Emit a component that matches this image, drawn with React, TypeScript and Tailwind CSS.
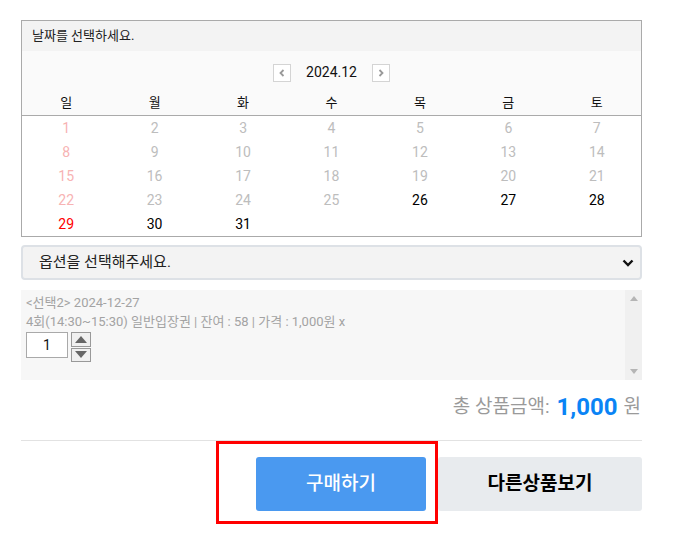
import React from "react";

const weekdays = ["일", "월", "화", "수", "목", "금", "토"];

// day -> style
const dayColor = (d: number, col: number) => {
  if (d === 29) return "text-[#ff0000]";
  if (d >= 26) return "text-black";
  if (col === 0) return "text-[#f7b3b3]";
  return "text-[#bdbdbd]";
};

const weeks: (number | null)[][] = [
  [1, 2, 3, 4, 5, 6, 7],
  [8, 9, 10, 11, 12, 13, 14],
  [15, 16, 17, 18, 19, 20, 21],
  [22, 23, 24, 25, 26, 27, 28],
  [29, 30, 31, null, null, null, null],
];

const NavBtn = ({ dir }: { dir: "prev" | "next" }) => (
  <button className="w-[18px] h-[18px] border border-[#d4d4d4] bg-white flex items-center justify-center">
    <svg width="8" height="8" viewBox="0 0 8 8">
      {dir === "prev" ? (
        <path d="M5.5 1 L2.5 4 L5.5 7" stroke="#999" strokeWidth="1.8" fill="none" />
      ) : (
        <path d="M2.5 1 L5.5 4 L2.5 7" stroke="#999" strokeWidth="1.8" fill="none" />
      )}
    </svg>
  </button>
);

export default function App() {
  return (
    <div
      className="relative w-[693px] h-[551px] bg-white"
      style={{ fontFamily: "Roboto, 'Noto Sans CJK KR', sans-serif" }}
    >
      <div className="ml-[21px] w-[621px] pt-[20px]">
        {/* calendar */}
        <div className="border border-[#aaaaaa]">
          <div className="h-[30px] bg-[#f3f3f3] pl-[10px] text-[13px] leading-[30px] text-[#222]">
            날짜를 선택하세요.
          </div>
          <div className="bg-[#fafafa] pt-[13px] border-b border-[#aaaaaa]">
            <div className="flex items-center justify-center gap-[15px] h-[17px]">
              <NavBtn dir="prev" />
              <span className="text-[14px] text-[#111]">2024.12</span>
              <NavBtn dir="next" />
            </div>
            <div className="grid grid-cols-7 mt-[10px] h-[24px] items-center">
              {weekdays.map((w) => (
                <div key={w} className="text-center text-[13px] text-[#111]">
                  {w}
                </div>
              ))}
            </div>
          </div>
          <div className="bg-white">
            {weeks.map((row, ri) => (
              <div key={ri} className="grid grid-cols-7 h-[24px] items-center">
                {row.map((d, ci) => (
                  <div
                    key={ci}
                    className={`text-center text-[14px] ${d ? dayColor(d, ci) : ""}`}
                  >
                    {d ?? ""}
                  </div>
                ))}
              </div>
            ))}
          </div>
        </div>

        {/* option select */}
        <div className="mt-[8px] h-[35px] border-2 border-[#dde1e6] rounded-[4px] bg-[#f3f3f3] flex items-center justify-between pl-[16px] pr-[6px]">
          <span className="text-[15px] text-[#222]">옵션을 선택해주세요.</span>
          <svg width="12" height="8" viewBox="0 0 12 8">
            <path d="M1.5 1.5 L6 6 L10.5 1.5" stroke="#111" strokeWidth="2.4" fill="none" />
          </svg>
        </div>

        {/* selected items */}
        <div className="mt-[10px] h-[90px] bg-[#f7f7f7] flex">
          <div className="flex-1 pl-[5px] pt-[3px] text-[13px] leading-[19px] text-[#a3a3a3]">
            <div>&lt;선택2&gt; 2024-12-27</div>
            <div>4회(14:30~15:30) 일반입장권 | 잔여 : 58 | 가격 : 1,000원 x</div>
            <div className="flex items-start gap-[3px] mt-[1px]">
              <div className="w-[42px] h-[26px] border border-[#a9a9a9] bg-white flex items-center justify-center text-[14px] text-[#111]">
                1
              </div>
              <div className="w-[20px] h-[30px] flex flex-col gap-[1px]">
                <div className="flex-1 border border-[#999] bg-[#f0f0f0] flex items-center justify-center">
                  <svg width="12" height="7" viewBox="0 0 12 7">
                    <path d="M6 0 L12 7 L0 7 Z" fill="#666" />
                  </svg>
                </div>
                <div className="flex-1 border border-[#999] bg-[#f0f0f0] flex items-center justify-center">
                  <svg width="12" height="7" viewBox="0 0 12 7">
                    <path d="M0 0 L12 0 L6 7 Z" fill="#666" />
                  </svg>
                </div>
              </div>
            </div>
          </div>
          <div className="w-[17px] bg-[#f0f0f0] flex flex-col justify-between items-center py-[6px]">
            <svg width="8" height="5" viewBox="0 0 8 5">
              <path d="M4 0 L8 5 L0 5 Z" fill="#b5b5b5" />
            </svg>
            <svg width="8" height="5" viewBox="0 0 8 5">
              <path d="M0 0 L8 0 L4 5 Z" fill="#b5b5b5" />
            </svg>
          </div>
        </div>

        {/* total */}
        <div className="mt-[13px] h-[28px] flex items-center justify-end pr-[1px]">
          <span className="text-[19px] text-[#9a9a9a]">총 상품금액:</span>
          <span className="ml-[7px] text-[24px] font-bold text-[#0a84f5]">1,000</span>
          <span className="ml-[6px] text-[19px] text-[#9a9a9a]">원</span>
        </div>

        <div className="mt-[19px] h-px bg-[#e2e2e2]" />

        {/* buttons */}
        <div className="mt-[16px] flex justify-end gap-[12px]">
          <button className="w-[170px] h-[54px] bg-[#4a99f0] rounded-[3px] text-white text-[19px] font-medium">
            구매하기
          </button>
          <button className="w-[204px] h-[54px] bg-[#e8ebee] rounded-[3px] text-black text-[19px] font-bold">
            다른상품보기
          </button>
        </div>
      </div>

      {/* highlight */}
      <div className="absolute left-[216px] top-[441px] w-[222px] h-[83px] border-[3px] border-[#ff0000]" />
    </div>
  );
}
